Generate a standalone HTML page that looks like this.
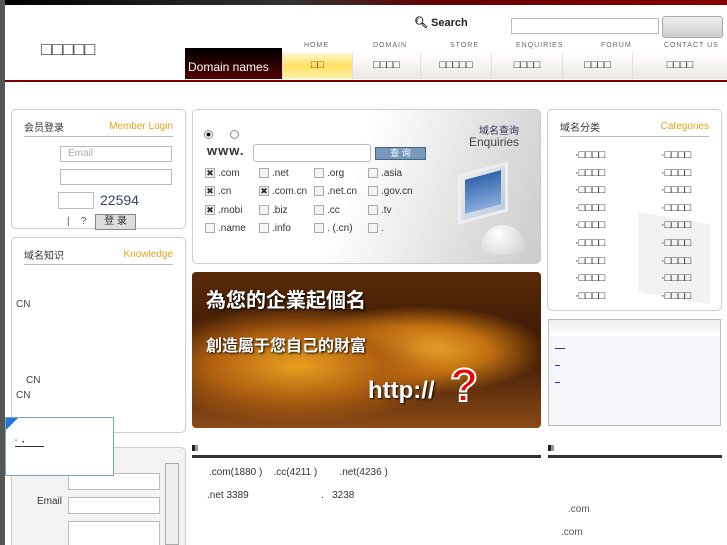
<!DOCTYPE html><html><head><meta charset="utf-8"><style>
*{margin:0;padding:0;box-sizing:border-box}
html,body{width:727px;height:545px;overflow:hidden}
body{background:#fff;font-family:"Liberation Sans","Noto Sans CJK SC",sans-serif;font-size:10px;color:#333;position:relative}
.a{position:absolute}
.box{position:absolute;border:1px solid #ccc;border-radius:5px;background:#fff}
.hd{position:absolute;left:12px;right:12px;top:7px;height:20px;border-bottom:1px solid #bbb;font-size:10px;display:flex;justify-content:space-between;align-items:center}
.hd b{font-weight:normal;color:#333}.hd i{font-style:normal;color:#e8a020}
.inp{position:absolute;border:1px solid #bbb;background:#fff}
.cb{position:absolute;width:10px;height:10px;border:1px solid #aaa;background:#f4f4f4;font-size:9px;line-height:8px;text-align:center}
.nav{position:absolute;top:53px;height:26px;background:linear-gradient(#fff,#ebe8e4);border-left:1px solid #ddd;font-size:11px;text-align:center;line-height:24px;color:#222}
.en{position:absolute;top:42px;font-size:7px;color:#666;letter-spacing:1px}
.cat{position:absolute;font-size:11px;color:#111}
</style></head><body>
<div class="a" style="left:0;top:0;width:727px;height:5px;background:linear-gradient(90deg,#000,#333 40%,#600 60%,#800)"></div>
<div class="a" style="left:0;top:0;width:5px;height:545px;background:#555"></div>
<div class="a" style="left:41px;top:39px;font-size:18px;color:#333">□□□□□</div>
<div class="a" style="left:414px;top:16px;font-size:11px;font-weight:bold;color:#222">🔍︎ Search</div>
<div class="inp" style="left:511px;top:18px;width:148px;height:16px"></div>
<div class="a" style="left:662px;top:16px;width:61px;height:22px;border:1px solid #aaa;border-radius:3px;background:linear-gradient(#eee,#ccc)"></div>
<div class="en" style="left:304px">HOME</div><div class="en" style="left:373px">DOMAIN</div><div class="en" style="left:450px">STORE</div><div class="en" style="left:516px">ENQUIRIES</div><div class="en" style="left:601px">FORUM</div><div class="en" style="left:664px">CONTACT US</div>
<div class="a" style="left:185px;top:48px;width:97px;height:31px;background:linear-gradient(#000,#500);color:#fff;font-size:12px;padding:12px 0 0 3px">Domain names</div>
<div class="nav" style="left:282px;width:70px;background:linear-gradient(#fff8d0,#ffe060 50%,#fff3b0);color:#a30">□□</div>
<div class="nav" style="left:352px;width:68px">□□□□</div>
<div class="nav" style="left:420px;width:71px">□□□□□</div>
<div class="nav" style="left:491px;width:71px">□□□□</div>
<div class="nav" style="left:562px;width:70px">□□□□</div>
<div class="nav" style="left:632px;width:95px">□□□□</div>
<div class="a" style="left:5px;top:80px;width:722px;height:2px;background:#700"></div>

<div class="box" style="left:11px;top:109px;width:175px;height:120px"><div class="hd"><b>会员登录</b><i>Member Login</i></div>
<div class="inp" style="left:48px;top:36px;width:112px;height:16px;color:#aaa;padding-left:7px;line-height:14px">Email</div>
<div class="inp" style="left:48px;top:59px;width:112px;height:16px"></div>
<div class="inp" style="left:46px;top:82px;width:36px;height:17px"></div>
<div class="a" style="left:88px;top:82px;font-size:14px;color:#346;letter-spacing:0">22594</div>
<div class="a" style="left:55px;top:106px;color:#555">|&nbsp;&nbsp;&nbsp; ?</div>
<div class="a" style="left:83px;top:104px;width:41px;height:16px;border:1px solid #888;background:#ddd;font-size:10px;text-align:center;line-height:14px">登 录</div></div>
<div class="box" style="left:11px;top:237px;width:175px;height:196px"><div class="hd"><b>域名知识</b><i>Knowledge</i></div>
<div class="a" style="left:4px;top:61px;color:#444">CN</div><div class="a" style="left:14px;top:137px;color:#444">CN</div><div class="a" style="left:4px;top:152px;color:#444">CN</div></div>
<div class="box" style="left:11px;top:447px;width:175px;height:110px;background:#f3f3f3"></div>
<div class="a" style="left:37px;top:496px;font-size:10px;color:#333">Email</div>
<div class="inp" style="left:68px;top:473px;width:92px;height:17px"></div>
<div class="inp" style="left:68px;top:497px;width:92px;height:17px"></div>
<div class="inp" style="left:68px;top:521px;width:92px;height:30px"></div>
<div class="a" style="left:165px;top:463px;width:14px;height:82px;border:1px solid #aaa;background:#eee"></div>
<div class="a" style="left:5px;top:417px;width:109px;height:59px;border:1px solid #7ab;background:#fff"><div class="a" style="left:0;top:0;border-style:solid;border-width:12px 12px 0 0;border-color:#2277dd transparent transparent transparent"></div><div class="a" style="left:9px;top:22px;width:29px;border-bottom:1px solid #333;font-size:6px">" &nbsp; •</div></div>

<div class="box" style="left:192px;top:109px;width:349px;height:155px;background:linear-gradient(110deg,#fff 45%,#ddd 80%,#ccc)">
<div class="a" style="left:11px;top:20px;width:9px;height:9px;border:1px solid #888;border-radius:50%;background:radial-gradient(#000 35%,#fff 45%)"></div>
<div class="a" style="left:37px;top:20px;width:9px;height:9px;border:1px solid #888;border-radius:50%"></div>
<div class="a" style="left:14px;top:33px;font-size:13px;font-weight:bold;color:#333;letter-spacing:1px">www.</div>
<div class="inp" style="left:60px;top:34px;width:118px;height:18px;border-radius:3px"></div>
<div class="a" style="left:182px;top:37px;width:51px;height:13px;background:#79b;border:1px solid #468;color:#fff;font-size:9px;text-align:center;line-height:11px">查 询</div>
<div class="a" style="left:286px;top:12px;font-size:10px;color:#335">域名查询</div>
<div class="a" style="left:276px;top:25px;font-size:12px;color:#444">Enquiries</div>
<div class="a" style="left:265px;top:58px;width:50px;height:50px;background:linear-gradient(135deg,#eee,#bcd);border:3px solid #eee;transform:skewY(-15deg)"><div style="margin:4px;height:34px;background:linear-gradient(#36a,#8ad)"></div></div>
<div class="a" style="left:288px;top:115px;width:44px;height:30px;background:radial-gradient(circle at 40% 30%,#fff,#ccc);border-radius:22px 22px 6px 6px"></div>
</div>
<div class="cb" style="left:205px;top:168px">✖</div><div class="a" style="left:218px;top:168px">.com</div>
<div class="cb" style="left:259px;top:168px"></div><div class="a" style="left:272px;top:168px">.net</div>
<div class="cb" style="left:314px;top:168px"></div><div class="a" style="left:327px;top:168px">.org</div>
<div class="cb" style="left:368px;top:168px"></div><div class="a" style="left:381px;top:168px">.asia</div>
<div class="cb" style="left:205px;top:186px">✖</div><div class="a" style="left:218px;top:186px">.cn</div>
<div class="cb" style="left:259px;top:186px">✖</div><div class="a" style="left:272px;top:186px">.com.cn</div>
<div class="cb" style="left:314px;top:186px"></div><div class="a" style="left:327px;top:186px">.net.cn</div>
<div class="cb" style="left:368px;top:186px"></div><div class="a" style="left:381px;top:186px">.gov.cn</div>
<div class="cb" style="left:205px;top:205px">✖</div><div class="a" style="left:218px;top:205px">.mobi</div>
<div class="cb" style="left:259px;top:205px"></div><div class="a" style="left:272px;top:205px">.biz</div>
<div class="cb" style="left:314px;top:205px"></div><div class="a" style="left:327px;top:205px">.cc</div>
<div class="cb" style="left:368px;top:205px"></div><div class="a" style="left:381px;top:205px">.tv</div>
<div class="cb" style="left:205px;top:223px"></div><div class="a" style="left:218px;top:223px">.name</div>
<div class="cb" style="left:259px;top:223px"></div><div class="a" style="left:272px;top:223px">.info</div>
<div class="cb" style="left:314px;top:223px"></div><div class="a" style="left:327px;top:223px">. (.cn)</div>
<div class="cb" style="left:368px;top:223px"></div><div class="a" style="left:381px;top:223px">.</div>

<div class="a" style="left:192px;top:272px;width:349px;height:156px;border-radius:4px;overflow:hidden;background:radial-gradient(ellipse at 30% 60%,#e8a020 0,#b06010 25%,transparent 45%),radial-gradient(ellipse at 65% 50%,#f0b030 0,#c07010 22%,transparent 40%),linear-gradient(#5a2a08,#3a1804 50%,#8a4a18)">
<div class="a" style="left:14px;top:12px;font-size:20px;font-weight:bold;color:#fff;text-shadow:1px 1px 2px #000">為您的企業起個名</div>
<div class="a" style="left:14px;top:60px;font-size:16px;font-weight:bold;color:#fff;text-shadow:1px 1px 2px #000">創造屬于您自己的財富</div>
<div class="a" style="left:176px;top:105px;font-size:24px;font-weight:bold;color:#fff;text-shadow:1px 1px 2px #000">http://</div>
<div class="a" style="left:258px;top:86px;font-size:46px;font-weight:bold;color:#e00;-webkit-text-stroke:2px #fff">?</div></div>

<div class="box" style="left:547px;top:109px;width:175px;height:202px"><div class="hd"><b>域名分类</b><i>Categories</i></div>
<div class="a" style="left:90px;top:108px;width:72px;height:80px;background:#f2f2f2;transform:skewY(10deg)"></div>
<div class="cat" style="left:27px;top:37px;line-height:17.6px">·□□□□<br>·□□□□<br>·□□□□<br>·□□□□<br>·□□□□<br>·□□□□<br>·□□□□<br>·□□□□<br>·□□□□</div>
<div class="cat" style="left:113px;top:37px;line-height:17.6px">·□□□□<br>·□□□□<br>·□□□□<br>·□□□□<br>·□□□□<br>·□□□□<br>·□□□□<br>·□□□□<br>·□□□□</div></div>
<div class="a" style="left:548px;top:319px;width:173px;height:107px;border:1px solid #bbb;background:#f5f6fa">
<div style="height:16px;background:linear-gradient(#eee,#fff)"></div>
<div class="a" style="left:6px;top:28px;width:10px;border-top:1px solid #33c"></div>
<div class="a" style="left:6px;top:45px;width:5px;border-top:1px solid #33c"></div>
<div class="a" style="left:6px;top:62px;width:5px;border-top:1px solid #33c"></div></div>

<div class="a" style="left:192px;top:445px;width:6px;height:6px;background:linear-gradient(90deg,#222 50%,#999 50%)"></div>
<div class="a" style="left:192px;top:455px;width:349px;height:3px;background:#333"></div>
<div class="a" style="left:548px;top:445px;width:6px;height:6px;background:linear-gradient(90deg,#222 50%,#999 50%)"></div>
<div class="a" style="left:548px;top:455px;width:174px;height:3px;background:#333"></div>
<div class="a" style="left:209px;top:467px">.com(1880 ) &nbsp;&nbsp; .cc(4211 ) &nbsp;&nbsp;&nbsp;&nbsp;&nbsp;&nbsp; .net(4236 )</div>
<div class="a" style="left:207px;top:490px">.net 3389</div><div class="a" style="left:321px;top:490px">. &nbsp;&nbsp;3238</div>
<div class="a" style="left:568px;top:504px;color:#555">.com</div><div class="a" style="left:561px;top:527px;color:#555">.com</div>
</body></html>
